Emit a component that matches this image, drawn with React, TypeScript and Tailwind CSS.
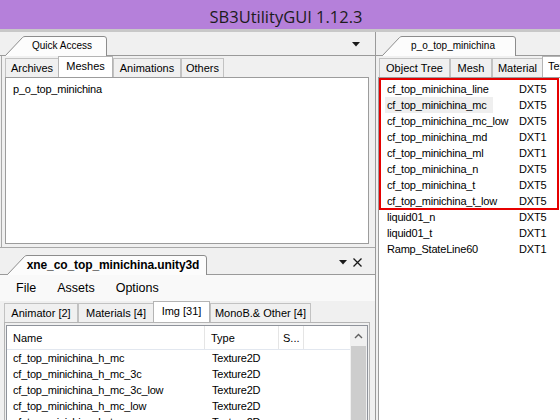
import React from "react";

const font = "font-['Liberation_Sans',Arial,sans-serif]";

function DockTab({
  w,
  label,
  bold,
  className,
  labelClass,
}: {
  w: number;
  label: string;
  bold?: boolean;
  className: string;
  labelClass: string;
}) {
  const W = w;
  return (
    <div className={`relative h-[20px] shrink-0 -mb-px ${className}`}>
      <svg className="absolute left-0 top-0" width={W} height={20} viewBox={`0 0 ${W} 20`}>
        <path
          d={`M0 20 L0.5 19.5 L17.5 1.5 Q18.5 0.5 20 0.5 L${W - 3} 0.5 Q${W - 0.5} 0.5 ${W - 0.5} 3 L${W - 0.5} 20`}
          fill="#fcfcfc"
          stroke="#8c8c8c"
          strokeWidth={1}
        />
      </svg>
      <div
        className={`relative h-full flex items-center justify-center leading-none ${labelClass} ${
          bold ? "font-bold text-[12px] tracking-[-0.1px]" : "text-[10px]"
        }`}
      >
        {label}
      </div>
    </div>
  );
}

function DropArrow() {
  return (
    <svg width="8" height="5" viewBox="0 0 8 5">
      <path d="M0 0 H8 L4 4.5 Z" fill="#1a1a1a" />
    </svg>
  );
}

function Tab({ label, sel, className }: { label: string; sel?: boolean; className: string }) {
  return (
    <div
      className={`shrink-0 flex items-center justify-center border border-b-0 leading-none text-[11px] ${
        sel
          ? "h-[21px] bg-white border-[#b4b4b4] relative z-10 pb-[1px]"
          : "h-[19px] bg-[#f0f0f0] border-[#c2c2c2]"
      } ${className}`}
    >
      {label}
    </div>
  );
}

const rightRows: [string, string][] = [
  ["cf_top_minichina_line", "DXT5"],
  ["cf_top_minichina_mc", "DXT5"],
  ["cf_top_minichina_mc_low", "DXT5"],
  ["cf_top_minichina_md", "DXT1"],
  ["cf_top_minichina_ml", "DXT1"],
  ["cf_top_minichina_n", "DXT5"],
  ["cf_top_minichina_t", "DXT5"],
  ["cf_top_minichina_t_low", "DXT5"],
  ["liquid01_n", "DXT5"],
  ["liquid01_t", "DXT1"],
  ["Ramp_StateLine60", "DXT1"],
];

const imgRows = [
  "cf_top_minichina_h_mc",
  "cf_top_minichina_h_mc_3c",
  "cf_top_minichina_h_mc_3c_low",
  "cf_top_minichina_h_mc_low",
  "cf_top_minichina_h_t",
];

function LeftColumn() {
  return (
    <div className="w-[375px] shrink-0 flex flex-col">
      {/* top dock pane */}
      <div className="h-[24px] shrink-0 flex items-end border-b border-[#9a9a9a] pl-[5px]">
        <DockTab w={102} label="Quick Access" className="w-[102px]" labelClass="pl-[12px]" />
        <div className="ml-auto mr-[15px] self-center pt-[1px]">
          <DropArrow />
        </div>
      </div>
      <div className="ml-[1px] border-l border-[#a8a8a8] flex flex-col">
        <div className="h-[21px] flex items-end pl-[3px]">
          <Tab label="Archives" className="w-[54px]" />
          <Tab label="Meshes" sel className="w-[55px] -ml-px" />
          <Tab label="Animations" className="w-[68px]" />
          <Tab label="Others" className="w-[43px]" />
        </div>
        <div className="ml-[3px] w-[364px] h-[167px] bg-white border border-[#9c9c9c] pt-[3px]">
          <div className="h-[16px] flex items-center pl-[7px] text-[11px] tracking-[-0.2px] leading-none">
            p_o_top_minichina
          </div>
        </div>
        <div className="h-[3px]" />
      </div>
      <div className="h-[1px] bg-[#a8a8a8] shrink-0" />
      {/* bottom dock pane */}
      <div className="h-[27px] shrink-0 flex items-end border-b border-[#9a9a9a] pl-[7px]">
        <DockTab
          w={200}
          label="xne_co_top_minichina.unity3d"
          bold
          className="w-[200px]"
          labelClass="pl-[12px]"
        />
        <div className="ml-auto mr-[13px] self-center flex items-center gap-[6px] pt-[2px]">
          <DropArrow />
          <svg width="9" height="9" viewBox="0 0 9 9">
            <path d="M0.5 0.5 L8.5 8.5 M8.5 0.5 L0.5 8.5" stroke="#1a1a1a" strokeWidth="1.3" />
          </svg>
        </div>
      </div>
      <div className="h-[26px] shrink-0 bg-[#f9f9f9] flex items-center pl-[16px] gap-[21px] text-[12.5px] leading-none">
        <span>File</span>
        <span>Assets</span>
        <span>Options</span>
      </div>
      <div className="h-[21px] shrink-0 flex items-end pl-[4px]">
        <Tab label="Animator [2]" className="w-[74px]" />
        <Tab label="Materials [4]" className="w-[76px]" />
        <Tab label="Img [31]" sel className="w-[57px] -ml-px" />
        <Tab label="MonoB.& Other [4]" className="w-[101px]" />
      </div>
      <div className="ml-[4px] w-[366px] flex-1 border border-b-0 border-[#b4b4b4] pt-[2px] px-[1px] flex">
        <div className="flex-1 bg-white border border-b-0 border-[#8f939b] flex">
          <div className="flex-1 flex flex-col">
            <div className="h-[24px] shrink-0 flex border-b border-[#e2e7ef] text-[11px] leading-none">
              <div className="w-[198px] border-r border-[#e5e5e5] flex items-center pl-[6px] pt-[1px]">Name</div>
              <div className="w-[74px] border-r border-[#e5e5e5] flex items-center pl-[6px] pt-[1px]">Type</div>
              <div className="w-[25px] border-r border-[#e5e5e5] flex items-center pl-[4px] pt-[1px]">S...</div>
            </div>
            {imgRows.map((r) => (
              <div key={r} className="h-[16px] shrink-0 flex items-center text-[11px] tracking-[-0.2px] leading-none">
                <div className="w-[198px] pl-[6px]">{r}</div>
                <div className="pl-[7px]">Texture2D</div>
              </div>
            ))}
          </div>
          <div className="w-[17px] shrink-0 bg-[#f0f0f0] flex flex-col items-center">
            <div className="h-[20px] flex items-center justify-center">
              <svg width="9" height="6" viewBox="0 0 9 6">
                <path d="M1 5 L4.5 1.5 L8 5" stroke="#606060" strokeWidth="1.4" fill="none" />
              </svg>
            </div>
            <div className="w-[15px] flex-1 bg-[#cdcdcd]" />
          </div>
        </div>
      </div>
    </div>
  );
}

function RightColumn() {
  return (
    <div className="flex-1 flex flex-col border-l border-[#9a9a9a]">
      <div className="h-[24px] shrink-0 flex items-end border-b border-[#9a9a9a] pl-[6px]">
        <DockTab w={134} label="p_o_top_minichina" className="w-[134px]" labelClass="pl-[8px]" />
      </div>
      <div className="h-[21px] shrink-0 flex items-end pl-[3px]">
        <Tab label="Object Tree" className="w-[71px]" />
        <Tab label="Mesh" className="w-[42px]" />
        <Tab label="Material" className="w-[51px]" />
        <Tab label="Texture" sel className="w-[60px] -ml-px justify-start pl-[5px]" />
      </div>
      <div className="ml-[2px] flex-1 bg-white border-l border-t border-[#9c9c9c] relative pt-[3px]">
        {rightRows.map(([n, f], i) => (
          <div key={n} className="h-[16px] flex items-center text-[11px] tracking-[-0.2px] leading-none">
            <div className="w-[134px] ml-[6px] shrink-0 h-full flex items-center">
              <span
                className={`h-full flex items-center pl-[2px] ${i === 1 ? "bg-[#efefef] w-[108px]" : ""}`}
              >
                {n}
              </span>
            </div>
            <div>{f}</div>
          </div>
        ))}
        <div className="absolute left-[0px] top-[0px] w-[180px] h-[132px] border-2 border-[#e60000]" />
      </div>
    </div>
  );
}

export default function App() {
  return (
    <div className={`w-[560px] h-[420px] overflow-hidden bg-[#f0f0f0] flex flex-col text-black ${font}`}>
      <div className="h-[29px] shrink-0 bg-[#b580da] flex items-center justify-center pt-[5px] pl-[12px]">
        <span className="font-['Open_Sans',sans-serif] text-[16.5px] leading-none text-[#1c1c1c]">
          SB3UtilityGUI 1.12.3
        </span>
      </div>
      <div className="h-[3px] shrink-0 bg-[#c8c8c8]" />
      <div className="flex flex-1 min-h-0">
        <LeftColumn />
        <RightColumn />
      </div>
    </div>
  );
}
